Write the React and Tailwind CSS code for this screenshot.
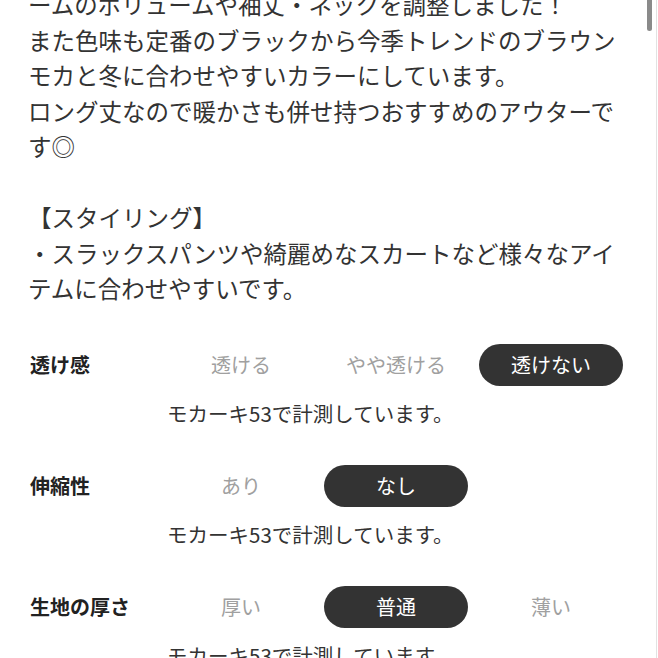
import React from 'react';

const lines = [
  'ームのボリュームや袖丈・ネックを調整しました！',
  'また色味も定番のブラックから今季トレンドのブラウン',
  'モカと冬に合わせやすいカラーにしています。',
  'ロング丈なので暖かさも併せ持つおすすめのアウターで',
  'す◎',
  '',
  '【スタイリング】',
  '・スラックスパンツや綺麗めなスカートなど様々なアイ',
  'テムに合わせやすいです。',
];

const specs = [
  { label: '透け感', options: ['透ける', 'やや透ける', '透けない'], active: 2 },
  { label: '伸縮性', options: ['あり', 'なし'], active: 1 },
  { label: '生地の厚さ', options: ['厚い', '普通', '薄い'], active: 1 },
];

function SpecRow({ label, options, active }) {
  return (
    <div className="flex flex-col">
      <div className="grid grid-cols-[128px_144px_144px_144px] gap-x-[11px] items-center h-[42px]">
        <div className="text-[20px] font-bold text-[#222]">{label}</div>
        {options.map((opt, i) =>
          i === active ? (
            <div
              key={i}
              className="flex items-center justify-center h-[42px] rounded-full bg-[#333333] text-white text-[20px]"
            >
              {opt}
            </div>
          ) : (
            <div key={i} className="flex items-center justify-center h-[42px] text-[20px] text-[#a0a0a0]">
              {opt}
            </div>
          )
        )}
      </div>
      <div className="mt-[13px] ml-[137px] text-[20.5px] leading-[28px] text-[#333]">
        モカーキ53で計測しています。
      </div>
    </div>
  );
}

export default function App() {
  return (
    <div
      className="flex w-[658px] h-[658px] overflow-hidden bg-white"
      style={{ fontFamily: '"Noto Sans CJK JP", "Noto Sans", sans-serif' }}
    >
      <div className="flex flex-col flex-1">
        <div className="mt-[-13px] pl-[28px] text-[23.5px] leading-[35.5px] text-[#333] whitespace-nowrap">
          {lines.map((l, i) => (
            <div key={i} className="h-[35.5px]">
              {l}
            </div>
          ))}
        </div>
        <div className="mt-[37px] pl-[30px] flex flex-col gap-[38px]">
          {specs.map((s) => (
            <SpecRow key={s.label} {...s} />
          ))}
        </div>
      </div>
      <div className="w-[12px] flex">
        <div className="ml-[1px] w-[5px] h-[31px] rounded-b-full bg-[#8a8a8a]" />
        <div className="ml-auto mr-[1px] w-px bg-[#e2e2e2]" />
      </div>
    </div>
  );
}
